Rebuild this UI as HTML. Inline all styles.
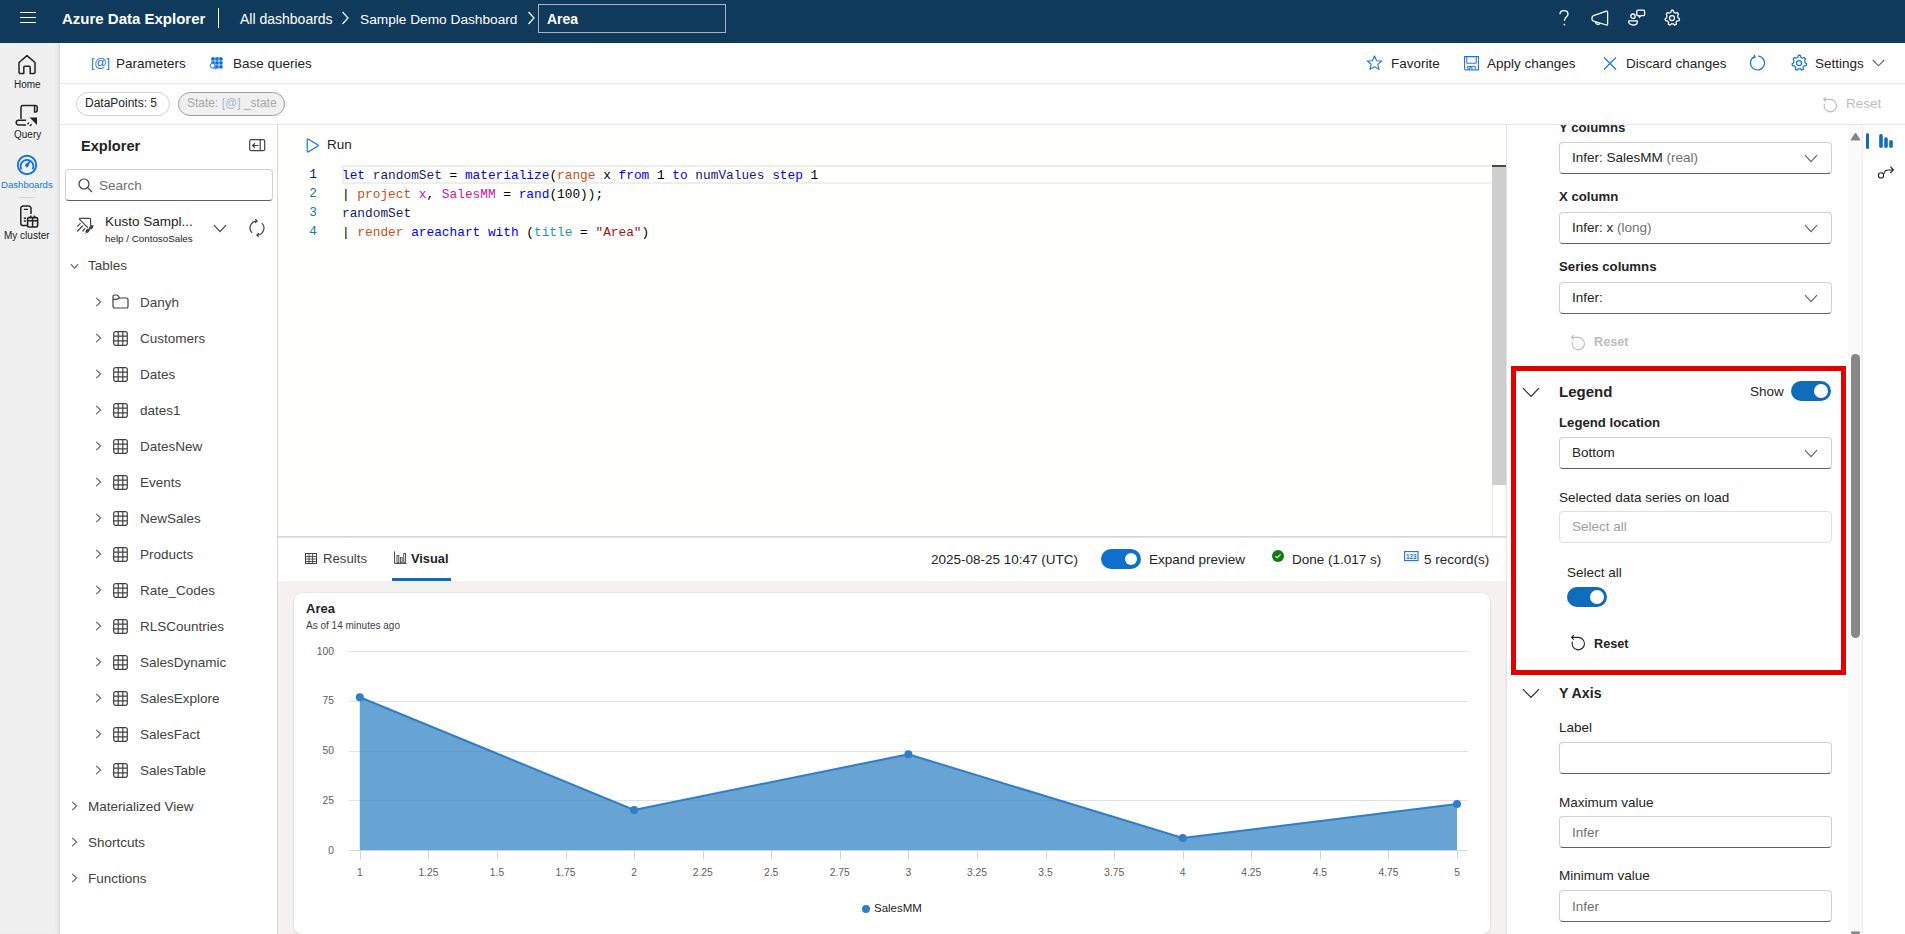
<!DOCTYPE html>
<html><head><meta charset="utf-8">
<style>
*{box-sizing:border-box;margin:0;padding:0}
html,body{width:1905px;height:934px;overflow:hidden;background:#fff;font-family:"Liberation Sans",sans-serif;color:#242424}
.a{position:absolute;white-space:nowrap}
#hdr{left:0;top:0;width:1905px;height:43px;background:#0f3a5c}
#rail{left:0;top:43px;width:60px;height:891px;background:#f0f0f0;border-right:1px solid #d9d9d9;box-shadow:inset -4px 0 4px -2px rgba(0,0,0,0.05)}
#tb{left:60px;top:43px;width:1845px;height:41px;background:#fff;border-bottom:1px solid #e6e6e6}
#pr{left:60px;top:84px;width:1845px;height:41px;background:#fff;border-bottom:1px solid #e6e6e6}
#exp{left:60px;top:125px;width:218px;height:809px;background:#fff;border-right:1px solid #d9d9d9}
#ed{left:278px;top:125px;width:1228px;height:412px;background:#fffffe}
#tabs{left:278px;top:537px;width:1228px;height:44px;background:#fff;border-top:1px solid #e1e1e1}
#chartbg{left:278px;top:581px;width:1228px;height:353px;background:#f3f2f1}
#card{left:294px;top:593px;width:1196px;height:341px;background:#fff;border-radius:8px;box-shadow:0 0 2px rgba(0,0,0,0.10),0 1px 3px rgba(0,0,0,0.06)}
#rp{left:1506px;top:125px;width:356px;height:809px;background:#fff;border-left:1px solid #e1e1e1}
#strip{left:1862px;top:125px;width:43px;height:809px;background:#fff;border-left:1px solid #ececec}
</style></head><body>
<div class="a" id="hdr">
<svg class="a" style="left:19px;top:11px" width="18" height="13" viewBox="0 0 18 13"><path d="M1 1.5H17M1 6.5H17M1 11.5H17" stroke="#fff" stroke-width="1.1"/></svg>
<div class="a" style="left:62px;top:10px;font-size:15px;font-weight:bold;color:#fff;line-height:18px">Azure Data Explorer</div>
<div class="a" style="left:218px;top:8px;width:1px;height:20px;background:#fff"></div>
<div class="a" style="left:240px;top:11px;font-size:14px;color:#fff;line-height:17px">All dashboards</div>
<svg class="a" style="left:341px;top:11px" width="8" height="14" viewBox="0 0 8 14"><path d="M1.5 1L7 7L1.5 13" stroke="#fff" stroke-width="1.2" fill="none"/></svg>
<div class="a" style="left:360px;top:11px;font-size:13.7px;color:#fff;line-height:17px">Sample Demo Dashboard</div>
<svg class="a" style="left:527px;top:11px" width="8" height="14" viewBox="0 0 8 14"><path d="M1.5 1L7 7L1.5 13" stroke="#fff" stroke-width="1.2" fill="none"/></svg>
<div class="a" style="left:538px;top:4px;width:188px;height:29px;border:1px solid #a9b4bf"></div>
<div class="a" style="left:547px;top:11px;font-size:14px;font-weight:bold;color:#fff;line-height:17px">Area</div>
<svg class="a" style="left:1557px;top:9px" width="14" height="18" viewBox="0 0 14 18"><path d="M3 5.2C3 3 4.8 1.6 7 1.6S11 3 11 5.2C11 7.6 7.4 8.2 7.4 11.8" stroke="#fff" stroke-width="1.35" fill="none"/><circle cx="7.4" cy="15.6" r="0.9" fill="#fff"/></svg>
<svg class="a" style="left:1590px;top:9px" width="20" height="18" viewBox="0 0 20 18"><path d="M3.6 6.6L16.4 2.2A0.9 0.9 0 0 1 17.6 3V15.2A0.9 0.9 0 0 1 16.4 16L3.6 12.2A2.2 2.2 0 0 1 2 10.2V8.6A2.2 2.2 0 0 1 3.6 6.6Z" stroke="#fff" stroke-width="1.3" fill="none" stroke-linejoin="round"/><path d="M5.6 13C5.6 15.6 9.4 16.2 9.8 14.2" stroke="#fff" stroke-width="1.3" fill="none"/></svg>
<svg class="a" style="left:1627px;top:9px" width="19" height="18" viewBox="0 0 19 18"><circle cx="6" cy="7.2" r="2.2" stroke="#fff" stroke-width="1.3" fill="none"/><path d="M2.2 11.8H9.8A0.6 0.6 0 0 1 10.4 12.4C10.4 14.6 8.6 16 6.2 16S1.6 14.6 1.6 12.4A0.6 0.6 0 0 1 2.2 11.8Z" stroke="#fff" stroke-width="1.3" fill="none"/><path d="M11 1.2H16.4A1.2 1.2 0 0 1 17.6 2.4V5.4A1.2 1.2 0 0 1 16.4 6.6H14.2L12.2 8.2V6.6H11A1.2 1.2 0 0 1 9.8 5.4V2.4A1.2 1.2 0 0 1 11 1.2Z" stroke="#fff" stroke-width="1.3" fill="none" stroke-linejoin="round"/></svg>
<svg class="a" style="left:1662px;top:7.8px" width="20" height="20" viewBox="0 0 24 24"><path d="M12 2.5l1.6 0.3 0.5 2.3a7.5 7.5 0 0 1 1.9 1.1l2.2-0.8 1.6 1.9-1 2.1a7.5 7.5 0 0 1 0.4 2.2l1.9 1.3-0.6 2.4-2.3 0.2a7.5 7.5 0 0 1-1.4 1.7l0.5 2.3-2.2 1.1-1.6-1.7a7.5 7.5 0 0 1-2.2 0l-1.6 1.7-2.2-1.1 0.5-2.3a7.5 7.5 0 0 1-1.4-1.7l-2.3-0.2-0.6-2.4 1.9-1.3a7.5 7.5 0 0 1 0.4-2.2l-1-2.1 1.6-1.9 2.2 0.8a7.5 7.5 0 0 1 1.9-1.1l0.5-2.3z" stroke="#fff" stroke-width="1.5" fill="none" stroke-linejoin="round"/><circle cx="12" cy="12" r="3" stroke="#fff" stroke-width="1.5" fill="none"/></svg>
</div>
<div class="a" id="rail"></div>
<svg class="a" style="left:17px;top:54px" width="20" height="21" viewBox="0 0 20 21"><path d="M2 8.5L10 1.6L18 8.5V18.6A1 1 0 0 1 17 19.6H13.2V13.2A1 1 0 0 0 12.2 12.2H7.8A1 1 0 0 0 6.8 13.2V19.6H3A1 1 0 0 1 2 18.6Z" stroke="#242424" stroke-width="1.5" fill="none" stroke-linejoin="round"/></svg>
<div class="a" style="left:14px;top:79px;font-size:10px;line-height:12px;color:#242424">Home</div>
<svg class="a" style="left:15px;top:104px" width="24" height="23" viewBox="0 0 24 23"><path d="M6 15V3.2A1.8 1.8 0 0 1 7.8 1.5H20.5A1.6 1.6 0 0 1 22.2 3.2V6.6A1.5 1.5 0 0 1 20.7 8H19.6V2" stroke="#242424" stroke-width="1.5" fill="none"/><path d="M11 21H3.6A2.2 2.2 0 0 1 3.6 16.2H11" stroke="#242424" stroke-width="1.5" fill="none"/><path d="M14.6 13.6H22V21Z" fill="#242424"/><path d="M12.4 20.4L14 18.8M14.8 22L16.6 20.2" stroke="#242424" stroke-width="1.3"/></svg>
<div class="a" style="left:14px;top:129px;font-size:10px;line-height:12px;color:#242424">Query</div>
<svg class="a" style="left:16px;top:154px" width="22" height="22" viewBox="0 0 22 22"><circle cx="11" cy="11" r="9.2" stroke="#1a73d9" stroke-width="1.9" fill="none"/><path d="M5.4 15.4A6.4 6.4 0 1 1 16.6 15.4" stroke="#1a73d9" stroke-width="1.7" fill="none"/><path d="M15.2 5.2L12.4 12.6A1.9 1.9 0 0 1 9.2 10.6Z" fill="#1a73d9"/></svg>
<div class="a" style="left:1px;top:179px;font-size:9.6px;line-height:12px;color:#1a73d9">Dashboards</div>
<div class="a" style="left:19px;top:197px;width:16px;height:1px;background:#d6d6d6"></div>
<svg class="a" style="left:19px;top:205px" width="20" height="23" viewBox="0 0 20 23"><path d="M9 20.6H4.2A2.4 2.4 0 0 1 1.8 18.2V3.4A2.4 2.4 0 0 1 4.2 1H9.6A2.4 2.4 0 0 1 12 3.4V9" stroke="#242424" stroke-width="1.5" fill="none"/><path d="M4.8 4.4H9M4.8 13.2H7M4.8 16H7" stroke="#242424" stroke-width="1.4"/><rect x="8.6" y="12.6" width="10" height="9.4" rx="1.4" stroke="#242424" stroke-width="1.6" fill="none"/><path d="M8.6 15.8H18.6M13.6 12.6V22M11 12.4L12.4 10.6M16.2 12.4L14.8 10.6" stroke="#242424" stroke-width="1.5"/></svg>
<div class="a" style="left:4px;top:230px;font-size:10px;line-height:12px;color:#242424">My cluster</div>
<div class="a" id="tb"></div>
<div class="a" style="left:91px;top:55px;font-size:12.5px;line-height:16px;color:#1a6fd1;letter-spacing:-0.3px">[@]</div>
<div class="a" style="left:116px;top:56px;font-size:13.5px;line-height:16px;color:#242424">Parameters</div>
<svg class="a" style="left:209px;top:56px" width="16" height="16" viewBox="0 0 16 16"><rect x="2.4" y="1.2" width="11.2" height="11.2" rx="2" fill="#a9d0f5"/><rect x="2.3" y="1.2" width="3.3" height="3.3" rx="1.3" fill="#0f6fd6"/><rect x="2.3" y="5.2" width="3.3" height="3.3" rx="1.3" fill="#0f6fd6"/><rect x="6.3" y="1.2" width="3.3" height="3.3" rx="1.3" fill="#0f6fd6"/><rect x="6.3" y="5.2" width="3.3" height="3.3" rx="1.3" fill="#0f6fd6"/><rect x="6.3" y="9.2" width="3.3" height="3.3" rx="1.3" fill="#0f6fd6"/><rect x="10.3" y="1.2" width="3.3" height="3.3" rx="1.3" fill="#0f6fd6"/><rect x="10.3" y="5.2" width="3.3" height="3.3" rx="1.3" fill="#0f6fd6"/><rect x="10.3" y="9.2" width="3.3" height="3.3" rx="1.3" fill="#0f6fd6"/><circle cx="3.6" cy="9.7" r="2.4" fill="#fff" stroke="#0f6fd6" stroke-width="0.9"/><path d="M5.3 11.5L7 13.6" stroke="#0f6fd6" stroke-width="1"/></svg>
<div class="a" style="left:233px;top:56px;font-size:13.5px;line-height:16px;color:#242424">Base queries</div>
<svg class="a" style="left:1366px;top:55px" width="17" height="16" viewBox="0 0 17 16"><path d="M8.5 1L10.6 5.7L15.7 6.1L11.8 9.4L13 14.4L8.5 11.7L4 14.4L5.2 9.4L1.3 6.1L6.4 5.7Z" stroke="#1a73d9" stroke-width="1.1" fill="none" stroke-linejoin="round"/></svg>
<div class="a" style="left:1391px;top:56px;font-size:13.5px;line-height:16px;color:#242424">Favorite</div>
<svg class="a" style="left:1464px;top:55.5px" width="15" height="15" viewBox="0 0 15 15"><path d="M0.6 0.6H14.4V14H2A1.4 1.4 0 0 1 0.6 12.6Z" stroke="#1a73d9" stroke-width="1.1" fill="none"/><path d="M2.8 0.6V7.2H12.2V0.6M3.8 14V10.4H11.2V14M5.4 14V11.8H8V14" stroke="#1a73d9" stroke-width="1" fill="none"/></svg>
<div class="a" style="left:1487px;top:56px;font-size:13.5px;line-height:16px;color:#242424">Apply changes</div>
<svg class="a" style="left:1603px;top:57px" width="14" height="13" viewBox="0 0 14 13"><path d="M1 0.5L13 12.5M13 0.5L1 12.5" stroke="#1a73d9" stroke-width="1.1"/></svg>
<div class="a" style="left:1626px;top:56px;font-size:13.5px;line-height:16px;color:#242424">Discard changes</div>
<svg class="a" style="left:1749px;top:54px" width="18" height="18" viewBox="0 0 18 18"><path d="M5.6 2.6A7 7 0 1 0 9 2" stroke="#1a73d9" stroke-width="1.2" fill="none"/><path d="M5.2 0.8L6 3.2L3.4 3.8" stroke="#1a73d9" stroke-width="1.2" fill="none"/></svg>
<svg class="a" style="left:1788.5px;top:52.7px" width="20" height="20" viewBox="0 0 24 24"><path d="M12 2.5l1.6 0.3 0.5 2.3a7.5 7.5 0 0 1 1.9 1.1l2.2-0.8 1.6 1.9-1 2.1a7.5 7.5 0 0 1 0.4 2.2l1.9 1.3-0.6 2.4-2.3 0.2a7.5 7.5 0 0 1-1.4 1.7l0.5 2.3-2.2 1.1-1.6-1.7a7.5 7.5 0 0 1-2.2 0l-1.6 1.7-2.2-1.1 0.5-2.3a7.5 7.5 0 0 1-1.4-1.7l-2.3-0.2-0.6-2.4 1.9-1.3a7.5 7.5 0 0 1 0.4-2.2l-1-2.1 1.6-1.9 2.2 0.8a7.5 7.5 0 0 1 1.9-1.1l0.5-2.3z" stroke="#1a73d9" stroke-width="1.5" fill="none" stroke-linejoin="round"/><circle cx="12" cy="12" r="3" stroke="#1a73d9" stroke-width="1.5" fill="none"/></svg>
<div class="a" style="left:1815px;top:56px;font-size:13.5px;line-height:16px;color:#242424">Settings</div>
<svg class="a" style="left:1872px;top:59px" width="13" height="8" viewBox="0 0 13 8"><path d="M0.8 1L6.5 6.8L12.2 1" stroke="#616161" stroke-width="1.1" fill="none"/></svg>
<div class="a" id="pr"></div>
<div class="a" style="left:76px;top:92px;width:94px;height:24px;border:1px solid #d1d1d1;border-radius:12px"></div>
<div class="a" style="left:85px;top:95px;font-size:12px;line-height:16px;color:#242424">DataPoints: 5</div>
<div class="a" style="left:178px;top:92px;width:107px;height:24px;border:1px solid #a0a0a0;border-radius:12px;background:#f0f0f0"></div>
<div class="a" style="left:187px;top:95px;font-size:12px;line-height:16px;color:#a8a8a8">State: <span style="color:#a9b7c9">[@]</span> _state</div>
<svg class="a" style="left:1821px;top:96px" width="17" height="17" viewBox="0 0 17 17"><path d="M3.4 7.6A6.2 6.2 0 1 0 9 3.4H2.6M4.8 1.2L2.6 3.4L4.8 5.6" stroke="#bdbdbd" stroke-width="1.15" fill="none" stroke-linejoin="round"/></svg>
<div class="a" style="left:1846px;top:96px;font-size:13.5px;line-height:16px;color:#bdbdbd">Reset</div>
<div class="a" id="exp"></div>
<div class="a" style="left:81px;top:137px;font-size:14.6px;font-weight:bold;line-height:18px;color:#242424">Explorer</div>
<svg class="a" style="left:249px;top:139px" width="17" height="13" viewBox="0 0 17 13"><rect x="0.7" y="0.7" width="15" height="11" rx="1.6" stroke="#424242" stroke-width="1.2" fill="none"/><path d="M11.2 1V11.6" stroke="#424242" stroke-width="1.2"/><path d="M9.6 6.5H3.6M6 4.2L3.6 6.5L6 8.8" stroke="#424242" stroke-width="1.2" fill="none"/></svg>
<div class="a" style="left:64.5px;top:169px;width:208.5px;height:32px;border:1px solid #d1d1d1;border-bottom-color:#616161;border-radius:4px"></div>
<svg class="a" style="left:78px;top:178px" width="15" height="15" viewBox="0 0 15 15"><circle cx="6" cy="6" r="5" stroke="#424242" stroke-width="1.2" fill="none"/><path d="M9.6 9.6L14 14" stroke="#424242" stroke-width="1.2"/></svg>
<div class="a" style="left:99px;top:178px;font-size:13.5px;line-height:16px;color:#707070">Search</div>
<svg class="a" style="left:70px;top:210px" width="26" height="26" viewBox="0 0 26 26"><path d="M9.6 8.4H19.6A1 1 0 0 1 20.6 9.4V14.8" stroke="#424242" stroke-width="1.2" fill="none" stroke-linecap="round"/><path d="M9.4 9.2L17.4 17.4M7.6 16.2L10.2 13.6M7.6 21L12.6 16M12.8 21L15 18.6" stroke="#424242" stroke-width="1.2" stroke-linecap="round"/><path d="M15.2 23.6L23.6 15.4" stroke="#424242" stroke-width="0.8"/><ellipse cx="17.6" cy="20.8" rx="2.5" ry="1.7" transform="rotate(-45 17.6 20.8)" fill="#424242"/><ellipse cx="21.2" cy="17.2" rx="2.5" ry="1.7" transform="rotate(-45 21.2 17.2)" fill="#424242"/></svg>
<div class="a" style="left:105px;top:214px;font-size:13.5px;line-height:16px;color:#242424">Kusto Sampl...</div>
<div class="a" style="left:105px;top:233px;font-size:9.8px;line-height:12px;color:#242424">help / ContosoSales</div>
<svg class="a" style="left:213px;top:224px" width="14" height="9" viewBox="0 0 14 9"><path d="M1 1.2L7 7.6L13 1.2" stroke="#424242" stroke-width="1.2" fill="none"/></svg>
<svg class="a" style="left:248px;top:218.6px" width="18" height="19" viewBox="0 0 18 19"><path d="M4.1 13.9A6.9 6.9 0 0 1 9 2.1M13.9 4.1A6.9 6.9 0 0 1 9 15.9" stroke="#424242" stroke-width="1.2" fill="none"/><path d="M7.2 0.3L9.2 2.1L7.2 3.9M10.8 14.1L8.8 15.9L10.8 17.7" stroke="#424242" stroke-width="1.2" fill="none"/></svg>
<svg class="a" style="left:70px;top:263px" width="9" height="7" viewBox="0 0 9 7"><path d="M0.8 1.2L4.5 5.2L8.2 1.2" stroke="#616161" stroke-width="1.1" fill="none"/></svg>
<div class="a" style="left:88px;top:258px;font-size:13.5px;line-height:16px;color:#424242">Tables</div>
<svg class="a" style="left:95px;top:297px" width="7" height="10" viewBox="0 0 7 10"><path d="M1.2 0.8L5.6 5L1.2 9.2" stroke="#616161" stroke-width="1.1" fill="none"/></svg>
<svg class="a" style="left:112px;top:294px" width="17" height="15" viewBox="0 0 17 15"><path d="M1 3V12.4A1.6 1.6 0 0 0 2.6 14H14.4A1.6 1.6 0 0 0 16 12.4V5.6A1.6 1.6 0 0 0 14.4 4H7.6L6 1.6A1.4 1.4 0 0 0 4.8 1H2.6A1.6 1.6 0 0 0 1 2.6Z" stroke="#424242" stroke-width="1.2" fill="none"/><path d="M1 5.4H4.8L7.4 4" stroke="#424242" stroke-width="1.2" fill="none"/></svg>
<div class="a" style="left:140px;top:295px;font-size:13.5px;line-height:16px;color:#424242">Danyh</div>
<svg class="a" style="left:95px;top:333px" width="7" height="10" viewBox="0 0 7 10"><path d="M1.2 0.8L5.6 5L1.2 9.2" stroke="#616161" stroke-width="1.1" fill="none"/></svg>
<svg class="a" style="left:113px;top:331px" width="15" height="15" viewBox="0 0 15 15"><rect x="0.7" y="0.7" width="13.6" height="13.6" rx="2" stroke="#424242" stroke-width="1.2" fill="none"/><path d="M5.2 1V14M9.8 1V14M1 5.2H14M1 9.8H14" stroke="#424242" stroke-width="1.2"/></svg>
<div class="a" style="left:140px;top:331px;font-size:13.5px;line-height:16px;color:#424242">Customers</div>
<svg class="a" style="left:95px;top:369px" width="7" height="10" viewBox="0 0 7 10"><path d="M1.2 0.8L5.6 5L1.2 9.2" stroke="#616161" stroke-width="1.1" fill="none"/></svg>
<svg class="a" style="left:113px;top:367px" width="15" height="15" viewBox="0 0 15 15"><rect x="0.7" y="0.7" width="13.6" height="13.6" rx="2" stroke="#424242" stroke-width="1.2" fill="none"/><path d="M5.2 1V14M9.8 1V14M1 5.2H14M1 9.8H14" stroke="#424242" stroke-width="1.2"/></svg>
<div class="a" style="left:140px;top:367px;font-size:13.5px;line-height:16px;color:#424242">Dates</div>
<svg class="a" style="left:95px;top:405px" width="7" height="10" viewBox="0 0 7 10"><path d="M1.2 0.8L5.6 5L1.2 9.2" stroke="#616161" stroke-width="1.1" fill="none"/></svg>
<svg class="a" style="left:113px;top:403px" width="15" height="15" viewBox="0 0 15 15"><rect x="0.7" y="0.7" width="13.6" height="13.6" rx="2" stroke="#424242" stroke-width="1.2" fill="none"/><path d="M5.2 1V14M9.8 1V14M1 5.2H14M1 9.8H14" stroke="#424242" stroke-width="1.2"/></svg>
<div class="a" style="left:140px;top:403px;font-size:13.5px;line-height:16px;color:#424242">dates1</div>
<svg class="a" style="left:95px;top:441px" width="7" height="10" viewBox="0 0 7 10"><path d="M1.2 0.8L5.6 5L1.2 9.2" stroke="#616161" stroke-width="1.1" fill="none"/></svg>
<svg class="a" style="left:113px;top:439px" width="15" height="15" viewBox="0 0 15 15"><rect x="0.7" y="0.7" width="13.6" height="13.6" rx="2" stroke="#424242" stroke-width="1.2" fill="none"/><path d="M5.2 1V14M9.8 1V14M1 5.2H14M1 9.8H14" stroke="#424242" stroke-width="1.2"/></svg>
<div class="a" style="left:140px;top:439px;font-size:13.5px;line-height:16px;color:#424242">DatesNew</div>
<svg class="a" style="left:95px;top:477px" width="7" height="10" viewBox="0 0 7 10"><path d="M1.2 0.8L5.6 5L1.2 9.2" stroke="#616161" stroke-width="1.1" fill="none"/></svg>
<svg class="a" style="left:113px;top:475px" width="15" height="15" viewBox="0 0 15 15"><rect x="0.7" y="0.7" width="13.6" height="13.6" rx="2" stroke="#424242" stroke-width="1.2" fill="none"/><path d="M5.2 1V14M9.8 1V14M1 5.2H14M1 9.8H14" stroke="#424242" stroke-width="1.2"/></svg>
<div class="a" style="left:140px;top:475px;font-size:13.5px;line-height:16px;color:#424242">Events</div>
<svg class="a" style="left:95px;top:513px" width="7" height="10" viewBox="0 0 7 10"><path d="M1.2 0.8L5.6 5L1.2 9.2" stroke="#616161" stroke-width="1.1" fill="none"/></svg>
<svg class="a" style="left:113px;top:511px" width="15" height="15" viewBox="0 0 15 15"><rect x="0.7" y="0.7" width="13.6" height="13.6" rx="2" stroke="#424242" stroke-width="1.2" fill="none"/><path d="M5.2 1V14M9.8 1V14M1 5.2H14M1 9.8H14" stroke="#424242" stroke-width="1.2"/></svg>
<div class="a" style="left:140px;top:511px;font-size:13.5px;line-height:16px;color:#424242">NewSales</div>
<svg class="a" style="left:95px;top:549px" width="7" height="10" viewBox="0 0 7 10"><path d="M1.2 0.8L5.6 5L1.2 9.2" stroke="#616161" stroke-width="1.1" fill="none"/></svg>
<svg class="a" style="left:113px;top:547px" width="15" height="15" viewBox="0 0 15 15"><rect x="0.7" y="0.7" width="13.6" height="13.6" rx="2" stroke="#424242" stroke-width="1.2" fill="none"/><path d="M5.2 1V14M9.8 1V14M1 5.2H14M1 9.8H14" stroke="#424242" stroke-width="1.2"/></svg>
<div class="a" style="left:140px;top:547px;font-size:13.5px;line-height:16px;color:#424242">Products</div>
<svg class="a" style="left:95px;top:585px" width="7" height="10" viewBox="0 0 7 10"><path d="M1.2 0.8L5.6 5L1.2 9.2" stroke="#616161" stroke-width="1.1" fill="none"/></svg>
<svg class="a" style="left:113px;top:583px" width="15" height="15" viewBox="0 0 15 15"><rect x="0.7" y="0.7" width="13.6" height="13.6" rx="2" stroke="#424242" stroke-width="1.2" fill="none"/><path d="M5.2 1V14M9.8 1V14M1 5.2H14M1 9.8H14" stroke="#424242" stroke-width="1.2"/></svg>
<div class="a" style="left:140px;top:583px;font-size:13.5px;line-height:16px;color:#424242">Rate_Codes</div>
<svg class="a" style="left:95px;top:621px" width="7" height="10" viewBox="0 0 7 10"><path d="M1.2 0.8L5.6 5L1.2 9.2" stroke="#616161" stroke-width="1.1" fill="none"/></svg>
<svg class="a" style="left:113px;top:619px" width="15" height="15" viewBox="0 0 15 15"><rect x="0.7" y="0.7" width="13.6" height="13.6" rx="2" stroke="#424242" stroke-width="1.2" fill="none"/><path d="M5.2 1V14M9.8 1V14M1 5.2H14M1 9.8H14" stroke="#424242" stroke-width="1.2"/></svg>
<div class="a" style="left:140px;top:619px;font-size:13.5px;line-height:16px;color:#424242">RLSCountries</div>
<svg class="a" style="left:95px;top:657px" width="7" height="10" viewBox="0 0 7 10"><path d="M1.2 0.8L5.6 5L1.2 9.2" stroke="#616161" stroke-width="1.1" fill="none"/></svg>
<svg class="a" style="left:113px;top:655px" width="15" height="15" viewBox="0 0 15 15"><rect x="0.7" y="0.7" width="13.6" height="13.6" rx="2" stroke="#424242" stroke-width="1.2" fill="none"/><path d="M5.2 1V14M9.8 1V14M1 5.2H14M1 9.8H14" stroke="#424242" stroke-width="1.2"/></svg>
<div class="a" style="left:140px;top:655px;font-size:13.5px;line-height:16px;color:#424242">SalesDynamic</div>
<svg class="a" style="left:95px;top:693px" width="7" height="10" viewBox="0 0 7 10"><path d="M1.2 0.8L5.6 5L1.2 9.2" stroke="#616161" stroke-width="1.1" fill="none"/></svg>
<svg class="a" style="left:113px;top:691px" width="15" height="15" viewBox="0 0 15 15"><rect x="0.7" y="0.7" width="13.6" height="13.6" rx="2" stroke="#424242" stroke-width="1.2" fill="none"/><path d="M5.2 1V14M9.8 1V14M1 5.2H14M1 9.8H14" stroke="#424242" stroke-width="1.2"/></svg>
<div class="a" style="left:140px;top:691px;font-size:13.5px;line-height:16px;color:#424242">SalesExplore</div>
<svg class="a" style="left:95px;top:729px" width="7" height="10" viewBox="0 0 7 10"><path d="M1.2 0.8L5.6 5L1.2 9.2" stroke="#616161" stroke-width="1.1" fill="none"/></svg>
<svg class="a" style="left:113px;top:727px" width="15" height="15" viewBox="0 0 15 15"><rect x="0.7" y="0.7" width="13.6" height="13.6" rx="2" stroke="#424242" stroke-width="1.2" fill="none"/><path d="M5.2 1V14M9.8 1V14M1 5.2H14M1 9.8H14" stroke="#424242" stroke-width="1.2"/></svg>
<div class="a" style="left:140px;top:727px;font-size:13.5px;line-height:16px;color:#424242">SalesFact</div>
<svg class="a" style="left:95px;top:765px" width="7" height="10" viewBox="0 0 7 10"><path d="M1.2 0.8L5.6 5L1.2 9.2" stroke="#616161" stroke-width="1.1" fill="none"/></svg>
<svg class="a" style="left:113px;top:763px" width="15" height="15" viewBox="0 0 15 15"><rect x="0.7" y="0.7" width="13.6" height="13.6" rx="2" stroke="#424242" stroke-width="1.2" fill="none"/><path d="M5.2 1V14M9.8 1V14M1 5.2H14M1 9.8H14" stroke="#424242" stroke-width="1.2"/></svg>
<div class="a" style="left:140px;top:763px;font-size:13.5px;line-height:16px;color:#424242">SalesTable</div>
<svg class="a" style="left:71px;top:801px" width="7" height="10" viewBox="0 0 7 10"><path d="M1.2 0.8L5.6 5L1.2 9.2" stroke="#616161" stroke-width="1.1" fill="none"/></svg>
<div class="a" style="left:88px;top:799px;font-size:13.5px;line-height:16px;color:#424242">Materialized View</div>
<svg class="a" style="left:71px;top:837px" width="7" height="10" viewBox="0 0 7 10"><path d="M1.2 0.8L5.6 5L1.2 9.2" stroke="#616161" stroke-width="1.1" fill="none"/></svg>
<div class="a" style="left:88px;top:835px;font-size:13.5px;line-height:16px;color:#424242">Shortcuts</div>
<svg class="a" style="left:71px;top:873px" width="7" height="10" viewBox="0 0 7 10"><path d="M1.2 0.8L5.6 5L1.2 9.2" stroke="#616161" stroke-width="1.1" fill="none"/></svg>
<div class="a" style="left:88px;top:871px;font-size:13.5px;line-height:16px;color:#424242">Functions</div>

<div class="a" id="ed"></div>
<div class="a" style="left:278px;top:165px;width:1228px;height:372px;background:#fffffe;border-bottom:1px solid #d6d6d6"></div>
<svg class="a" style="left:306px;top:138px" width="13" height="15" viewBox="0 0 13 15"><path d="M1.2 1.6V13.4A0.6 0.6 0 0 0 2.1 13.9L12 8A0.6 0.6 0 0 0 12 7L2.1 1.1A0.6 0.6 0 0 0 1.2 1.6Z" stroke="#1a73d9" stroke-width="1.2" fill="none"/></svg>
<div class="a" style="left:327px;top:137px;font-size:13.5px;line-height:16px;color:#242424">Run</div>
<div class="a" style="left:342px;top:165px;width:1150px;height:19px;border:2px solid #eeeeee;border-right:none"></div>
<div class="a" style="left:300px;top:165px;width:17px;text-align:right;font-family:'Liberation Mono',monospace;font-size:12.8px;line-height:19px;color:#0b216f">1</div>
<div class="a" style="left:342px;top:165px;font-family:'Liberation Mono',monospace;font-size:12.8px;line-height:19px;color:#000;margin-top:1px"><span style="color:#0000ff">let</span> <span style="color:#191970">randomSet</span> = <span style="color:#0000ff">materialize</span>(<span style="color:#c8501a">range</span> x <span style="color:#0000ff">from</span> 1 <span style="color:#0000ff">to</span> <span style="color:#191970">numValues</span> <span style="color:#0000ff">step</span> 1</div>
<div class="a" style="left:300px;top:184px;width:17px;text-align:right;font-family:'Liberation Mono',monospace;font-size:12.8px;line-height:19px;color:#237893">2</div>
<div class="a" style="left:342px;top:184px;font-family:'Liberation Mono',monospace;font-size:12.8px;line-height:19px;color:#000;margin-top:1px">| <span style="color:#c8501a">project</span> <span style="color:#c4179b">x</span>, <span style="color:#c4179b">SalesMM</span> = <span style="color:#0000ff">rand</span>(100));</div>
<div class="a" style="left:300px;top:203px;width:17px;text-align:right;font-family:'Liberation Mono',monospace;font-size:12.8px;line-height:19px;color:#237893">3</div>
<div class="a" style="left:342px;top:203px;font-family:'Liberation Mono',monospace;font-size:12.8px;line-height:19px;color:#000;margin-top:1px"><span style="color:#191970">randomSet</span></div>
<div class="a" style="left:300px;top:222px;width:17px;text-align:right;font-family:'Liberation Mono',monospace;font-size:12.8px;line-height:19px;color:#237893">4</div>
<div class="a" style="left:342px;top:222px;font-family:'Liberation Mono',monospace;font-size:12.8px;line-height:19px;color:#000;margin-top:1px">| <span style="color:#c8501a">render</span> <span style="color:#0000ff">areachart</span> <span style="color:#0000ff">with</span> (<span style="color:#2b91af">title</span> = <span style="color:#a31515">"Area"</span>)</div>
<div class="a" style="left:1492px;top:165px;width:14px;height:370px;border-left:1px solid #e8e8e8"></div>
<div class="a" style="left:1492px;top:167px;width:14px;height:318px;background:#cecece"></div>
<div class="a" style="left:1492px;top:165px;width:14px;height:2px;background:#4a4a4a"></div>

<div class="a" id="tabs"></div>
<svg class="a" style="left:305px;top:553px" width="12" height="11" viewBox="0 0 12 11"><rect x="0.5" y="0.5" width="11" height="10" stroke="#424242" stroke-width="1" fill="none"/><path d="M0.5 3.5H11.5M0.5 6H11.5M0.5 8.5H11.5M4 0.5V10.5M7.6 0.5V10.5" stroke="#424242" stroke-width="0.9"/></svg>
<div class="a" style="left:323px;top:551px;font-size:13.2px;line-height:16px;color:#424242">Results</div>
<svg class="a" style="left:394px;top:551px" width="13" height="13" viewBox="0 0 13 13"><path d="M0.6 0.4V12.4H12.6" stroke="#424242" stroke-width="1" fill="none"/><rect x="3" y="4.6" width="1.8" height="6.8" stroke="#424242" stroke-width="0.9" fill="none"/><rect x="6.4" y="6.6" width="1.8" height="4.8" stroke="#424242" stroke-width="0.9" fill="none"/><rect x="9.8" y="2.4" width="1.8" height="9" stroke="#424242" stroke-width="0.9" fill="none"/></svg>
<div class="a" style="left:411px;top:551px;font-size:12.8px;font-weight:bold;line-height:16px;color:#242424">Visual</div>
<div class="a" style="left:392px;top:578px;width:59px;height:2.5px;background:#0f6cbd;border-radius:0"></div>
<div class="a" style="left:931px;top:552px;font-size:13.5px;line-height:16px;color:#242424">2025-08-25 10:47 (UTC)</div>
<div class="a" style="left:1101px;top:549px;width:40px;height:20px;border-radius:10px;background:#0f6fcf"></div>
<div class="a" style="left:1125px;top:553px;width:12px;height:12px;border-radius:6px;background:#fff"></div>
<div class="a" style="left:1149px;top:552px;font-size:13.5px;line-height:16px;color:#242424">Expand preview</div>
<svg class="a" style="left:1272px;top:550px" width="12" height="12" viewBox="0 0 12 12"><circle cx="6" cy="6" r="6" fill="#107c10"/><path d="M3.4 6.2L5.2 7.8L8.6 4.4" stroke="#fff" stroke-width="1.1" fill="none"/></svg>
<div class="a" style="left:1292px;top:552px;font-size:13.5px;line-height:16px;color:#242424">Done (1.017 s)</div>
<svg class="a" style="left:1404px;top:551px" width="15" height="11" viewBox="0 0 15 11"><rect x="0.6" y="0.6" width="13.4" height="9" stroke="#1a73d9" stroke-width="1.1" fill="none"/><text x="7.3" y="7.8" font-family="Liberation Sans" font-size="6.4" fill="#1a73d9" text-anchor="middle" font-weight="bold">123</text></svg>
<div class="a" style="left:1424px;top:552px;font-size:13.5px;line-height:16px;color:#242424">5 record(s)</div>

<div class="a" id="chartbg"></div>
<div class="a" id="card"></div>
<div class="a" style="left:306px;top:601px;font-size:13px;font-weight:bold;line-height:16px;color:#242424">Area</div>
<div class="a" style="left:306px;top:619px;font-size:10px;line-height:13px;color:#424242">As of 14 minutes ago</div>
<svg class="a" style="left:0;top:0" width="1905" height="934" viewBox="0 0 1905 934"><path d="M349 850.5H1467.5" stroke="#ccd6eb" stroke-width="1"/><text x="334" y="853.7" font-family="Liberation Sans" font-size="10.3" fill="#605e5c" text-anchor="end">0</text><path d="M349 800.5H1467.5" stroke="#e1e1e1" stroke-width="1"/><text x="334" y="803.9" font-family="Liberation Sans" font-size="10.3" fill="#605e5c" text-anchor="end">25</text><path d="M349 751.5H1467.5" stroke="#e1e1e1" stroke-width="1"/><text x="334" y="754.1" font-family="Liberation Sans" font-size="10.3" fill="#605e5c" text-anchor="end">50</text><path d="M349 701.5H1467.5" stroke="#e1e1e1" stroke-width="1"/><text x="334" y="704.4" font-family="Liberation Sans" font-size="10.3" fill="#605e5c" text-anchor="end">75</text><path d="M349 651.5H1467.5" stroke="#e1e1e1" stroke-width="1"/><text x="334" y="654.6" font-family="Liberation Sans" font-size="10.3" fill="#605e5c" text-anchor="end">100</text><path d="M360.5 850V859.5" stroke="#ccd6eb" stroke-width="1"/><text x="359.8" y="876" font-family="Liberation Sans" font-size="10.3" fill="#605e5c" text-anchor="middle">1</text><path d="M428.5 850V859.5" stroke="#ccd6eb" stroke-width="1"/><text x="428.4" y="876" font-family="Liberation Sans" font-size="10.3" fill="#605e5c" text-anchor="middle">1.25</text><path d="M497.5 850V859.5" stroke="#ccd6eb" stroke-width="1"/><text x="497.0" y="876" font-family="Liberation Sans" font-size="10.3" fill="#605e5c" text-anchor="middle">1.5</text><path d="M566.5 850V859.5" stroke="#ccd6eb" stroke-width="1"/><text x="565.5" y="876" font-family="Liberation Sans" font-size="10.3" fill="#605e5c" text-anchor="middle">1.75</text><path d="M634.5 850V859.5" stroke="#ccd6eb" stroke-width="1"/><text x="634.1" y="876" font-family="Liberation Sans" font-size="10.3" fill="#605e5c" text-anchor="middle">2</text><path d="M703.5 850V859.5" stroke="#ccd6eb" stroke-width="1"/><text x="702.7" y="876" font-family="Liberation Sans" font-size="10.3" fill="#605e5c" text-anchor="middle">2.25</text><path d="M771.5 850V859.5" stroke="#ccd6eb" stroke-width="1"/><text x="771.2" y="876" font-family="Liberation Sans" font-size="10.3" fill="#605e5c" text-anchor="middle">2.5</text><path d="M840.5 850V859.5" stroke="#ccd6eb" stroke-width="1"/><text x="839.8" y="876" font-family="Liberation Sans" font-size="10.3" fill="#605e5c" text-anchor="middle">2.75</text><path d="M908.5 850V859.5" stroke="#ccd6eb" stroke-width="1"/><text x="908.4" y="876" font-family="Liberation Sans" font-size="10.3" fill="#605e5c" text-anchor="middle">3</text><path d="M977.5 850V859.5" stroke="#ccd6eb" stroke-width="1"/><text x="977.0" y="876" font-family="Liberation Sans" font-size="10.3" fill="#605e5c" text-anchor="middle">3.25</text><path d="M1046.5 850V859.5" stroke="#ccd6eb" stroke-width="1"/><text x="1045.5" y="876" font-family="Liberation Sans" font-size="10.3" fill="#605e5c" text-anchor="middle">3.5</text><path d="M1114.5 850V859.5" stroke="#ccd6eb" stroke-width="1"/><text x="1114.1" y="876" font-family="Liberation Sans" font-size="10.3" fill="#605e5c" text-anchor="middle">3.75</text><path d="M1183.5 850V859.5" stroke="#ccd6eb" stroke-width="1"/><text x="1182.7" y="876" font-family="Liberation Sans" font-size="10.3" fill="#605e5c" text-anchor="middle">4</text><path d="M1251.5 850V859.5" stroke="#ccd6eb" stroke-width="1"/><text x="1251.3" y="876" font-family="Liberation Sans" font-size="10.3" fill="#605e5c" text-anchor="middle">4.25</text><path d="M1320.5 850V859.5" stroke="#ccd6eb" stroke-width="1"/><text x="1319.9" y="876" font-family="Liberation Sans" font-size="10.3" fill="#605e5c" text-anchor="middle">4.5</text><path d="M1388.5 850V859.5" stroke="#ccd6eb" stroke-width="1"/><text x="1388.4" y="876" font-family="Liberation Sans" font-size="10.3" fill="#605e5c" text-anchor="middle">4.75</text><path d="M1457.5 850V859.5" stroke="#ccd6eb" stroke-width="1"/><text x="1457.0" y="876" font-family="Liberation Sans" font-size="10.3" fill="#605e5c" text-anchor="middle">5</text><path d="M359.8 850.1 L359.8 697.2 L634.1 809.9 L908.4 754.3 L1182.7 838.0 L1457.0 803.9 L1457.0 850.1Z" fill="#2d81c3" fill-opacity="0.72"/><path d="M359.8 697.2 L634.1 809.9 L908.4 754.3 L1182.7 838.0 L1457.0 803.9" stroke="#2f7ec7" stroke-width="2" fill="none"/><circle cx="359.8" cy="697.2" r="4" fill="#2f7ec7"/><circle cx="634.1" cy="809.9" r="4" fill="#2f7ec7"/><circle cx="908.4" cy="754.3" r="4" fill="#2f7ec7"/><circle cx="1182.7" cy="838.0" r="4" fill="#2f7ec7"/><circle cx="1457.0" cy="803.9" r="4" fill="#2f7ec7"/><circle cx="866" cy="909" r="4" fill="#2f7ec7"/></svg>
<div class="a" style="left:874px;top:901px;font-size:11.5px;line-height:15px;color:#242424">SalesMM</div>

<div class="a" id="rp"></div>
<div class="a" style="left:1507px;top:125px;width:341px;height:809px;overflow:hidden">
<div class="a" style="left:52px;top:-5.5px;font-size:13.2px;font-weight:bold;line-height:16px;color:#242424">Y columns</div>
</div>
<div class="a" style="left:1559px;top:142px;width:273px;height:32px;border:1px solid #d1d1d1;border-bottom-color:#616161;border-radius:4px;background:#fff"></div>
<div class="a" style="left:1572px;top:150.0px;font-size:13.5px;line-height:16px;color:#242424">Infer: SalesMM <span style="color:#707070">(real)</span></div>
<svg class="a" style="left:1804px;top:154px" width="14" height="9" viewBox="0 0 14 9"><path d="M1 1.2L7 7.6L13 1.2" stroke="#616161" stroke-width="1.1" fill="none"/></svg>
<div class="a" style="left:1559px;top:189.1px;font-size:13.2px;line-height:16px;color:#242424;font-weight:bold">X column</div>
<div class="a" style="left:1559px;top:212px;width:273px;height:32px;border:1px solid #d1d1d1;border-bottom-color:#616161;border-radius:4px;background:#fff"></div>
<div class="a" style="left:1572px;top:220.0px;font-size:13.5px;line-height:16px;color:#242424">Infer: x <span style="color:#707070">(long)</span></div>
<svg class="a" style="left:1804px;top:224px" width="14" height="9" viewBox="0 0 14 9"><path d="M1 1.2L7 7.6L13 1.2" stroke="#616161" stroke-width="1.1" fill="none"/></svg>
<div class="a" style="left:1559px;top:258.9px;font-size:13.2px;line-height:16px;color:#242424;font-weight:bold">Series columns</div>
<div class="a" style="left:1559px;top:282px;width:273px;height:32px;border:1px solid #d1d1d1;border-bottom-color:#616161;border-radius:4px;background:#fff"></div>
<div class="a" style="left:1572px;top:290.0px;font-size:13.5px;line-height:16px;color:#242424">Infer:</div>
<svg class="a" style="left:1804px;top:294px" width="14" height="9" viewBox="0 0 14 9"><path d="M1 1.2L7 7.6L13 1.2" stroke="#616161" stroke-width="1.1" fill="none"/></svg>
<svg class="a" style="left:1569px;top:334px" width="17" height="17" viewBox="0 0 17 17"><path d="M3.4 7.6A6.2 6.2 0 1 0 9 3.4H2.6M4.8 1.2L2.6 3.4L4.8 5.6" stroke="#bdbdbd" stroke-width="1.15" fill="none" stroke-linejoin="round"/></svg>
<div class="a" style="left:1594px;top:333.9px;font-size:12.7px;line-height:16px;color:#bdbdbd;font-weight:bold">Reset</div>
<div class="a" style="left:1511px;top:366px;width:335px;height:309px;border:5px solid #e40000"></div>
<svg class="a" style="left:1522px;top:387px" width="18" height="11" viewBox="0 0 18 11"><path d="M1 1.2L9 9.4L17 1.2" stroke="#242424" stroke-width="1.15" fill="none"/></svg>
<div class="a" style="left:1559px;top:383.0px;font-size:15px;line-height:18px;color:#242424;font-weight:bold">Legend</div>
<div class="a" style="left:1750px;top:383.8px;font-size:13.5px;line-height:16px;color:#242424">Show</div>
<div class="a" style="left:1791px;top:381px;width:40px;height:20px;border-radius:10px;background:#0f6cbd"></div><div class="a" style="left:1814px;top:384px;width:14px;height:14px;border-radius:7px;background:#fff"></div>
<div class="a" style="left:1559px;top:414.7px;font-size:13.2px;line-height:16px;color:#242424;font-weight:bold">Legend location</div>
<div class="a" style="left:1559px;top:437px;width:273px;height:32px;border:1px solid #d1d1d1;border-bottom-color:#616161;border-radius:4px;background:#fff"></div>
<div class="a" style="left:1572px;top:445.0px;font-size:13.5px;line-height:16px;color:#242424">Bottom</div>
<svg class="a" style="left:1804px;top:449px" width="14" height="9" viewBox="0 0 14 9"><path d="M1 1.2L7 7.6L13 1.2" stroke="#616161" stroke-width="1.1" fill="none"/></svg>
<div class="a" style="left:1559px;top:489.9px;font-size:13.5px;line-height:16px;color:#242424">Selected data series on load</div>
<div class="a" style="left:1559px;top:511px;width:273px;height:32px;border:1px solid #e0e0e0;border-bottom-color:#e0e0e0;border-radius:4px;background:#fff"></div>
<div class="a" style="left:1572px;top:519.3px;font-size:13.5px;line-height:16px;color:#a0a0a0">Select all</div>
<div class="a" style="left:1567px;top:565.0px;font-size:13.5px;line-height:16px;color:#242424">Select all</div>
<div class="a" style="left:1567px;top:587px;width:40px;height:20px;border-radius:10px;background:#0f6cbd"></div><div class="a" style="left:1590px;top:590px;width:14px;height:14px;border-radius:7px;background:#fff"></div>
<svg class="a" style="left:1569px;top:634px" width="17" height="17" viewBox="0 0 17 17"><path d="M3.4 7.6A6.2 6.2 0 1 0 9 3.4H2.6M4.8 1.2L2.6 3.4L4.8 5.6" stroke="#242424" stroke-width="1.15" fill="none" stroke-linejoin="round"/></svg>
<div class="a" style="left:1594px;top:635.7px;font-size:12.7px;line-height:16px;color:#242424;font-weight:bold">Reset</div>
<svg class="a" style="left:1522px;top:688px" width="18" height="11" viewBox="0 0 18 11"><path d="M1 1.2L9 9.4L17 1.2" stroke="#242424" stroke-width="1.15" fill="none"/></svg>
<div class="a" style="left:1559px;top:684.1px;font-size:14.2px;line-height:18px;color:#242424;font-weight:bold">Y Axis</div>
<div class="a" style="left:1559px;top:720.3px;font-size:13.5px;line-height:16px;color:#242424">Label</div>
<div class="a" style="left:1559px;top:742px;width:273px;height:32px;border:1px solid #d1d1d1;border-bottom-color:#616161;border-radius:4px;background:#fff"></div>
<div class="a" style="left:1559px;top:794.5px;font-size:13.5px;line-height:16px;color:#242424">Maximum value</div>
<div class="a" style="left:1559px;top:816px;width:273px;height:32px;border:1px solid #d1d1d1;border-bottom-color:#616161;border-radius:4px;background:#fff"></div>
<div class="a" style="left:1572px;top:825.3px;font-size:13.5px;line-height:16px;color:#707070">Infer</div>
<div class="a" style="left:1559px;top:868.1px;font-size:13.5px;line-height:16px;color:#242424">Minimum value</div>
<div class="a" style="left:1559px;top:890px;width:273px;height:32px;border:1px solid #d1d1d1;border-bottom-color:#616161;border-radius:4px;background:#fff"></div>
<div class="a" style="left:1572px;top:899.3px;font-size:13.5px;line-height:16px;color:#707070">Infer</div>
<div class="a" style="left:1848px;top:125px;width:15px;height:809px;background:#fafafa"></div>
<svg class="a" style="left:1850px;top:132px" width="11" height="9" viewBox="0 0 11 9"><path d="M5.5 1L10 8H1Z" fill="#858585" stroke="#858585" stroke-linejoin="round"/></svg>
<div class="a" style="left:1851px;top:354px;width:9px;height:284px;border-radius:4.5px;background:#888888"></div>
<svg class="a" style="left:1850px;top:931px" width="11" height="8" viewBox="0 0 11 8"><path d="M1 1H10L5.5 7Z" fill="#858585" stroke="#858585" stroke-linejoin="round"/></svg>

<div class="a" id="strip"></div>
<div class="a" style="left:1866px;top:133px;width:3px;height:16px;border-radius:1.5px;background:#0f6cbd"></div>
<svg class="a" style="left:1878px;top:133px" width="16" height="16" viewBox="0 0 16 16"><rect x="1.2" y="1" width="3.6" height="14" rx="1.8" fill="#0f6cbd"/><rect x="6.2" y="4.2" width="3.6" height="10.8" rx="1.8" fill="#0f6cbd"/><rect x="11.2" y="7" width="3.6" height="8" rx="1.8" fill="#0f6cbd"/></svg>
<svg class="a" style="left:1877px;top:165px" width="18" height="15" viewBox="0 0 18 15"><circle cx="4" cy="10.4" r="2.6" stroke="#242424" stroke-width="1.1" fill="none"/><path d="M6.2 9.2C8 8.6 7 6 9 5.4C10.6 4.8 13 4.8 16 4.8M13.4 1.6L16.4 4.8L13.2 8" stroke="#242424" stroke-width="1.1" fill="none"/></svg>

</body></html>
